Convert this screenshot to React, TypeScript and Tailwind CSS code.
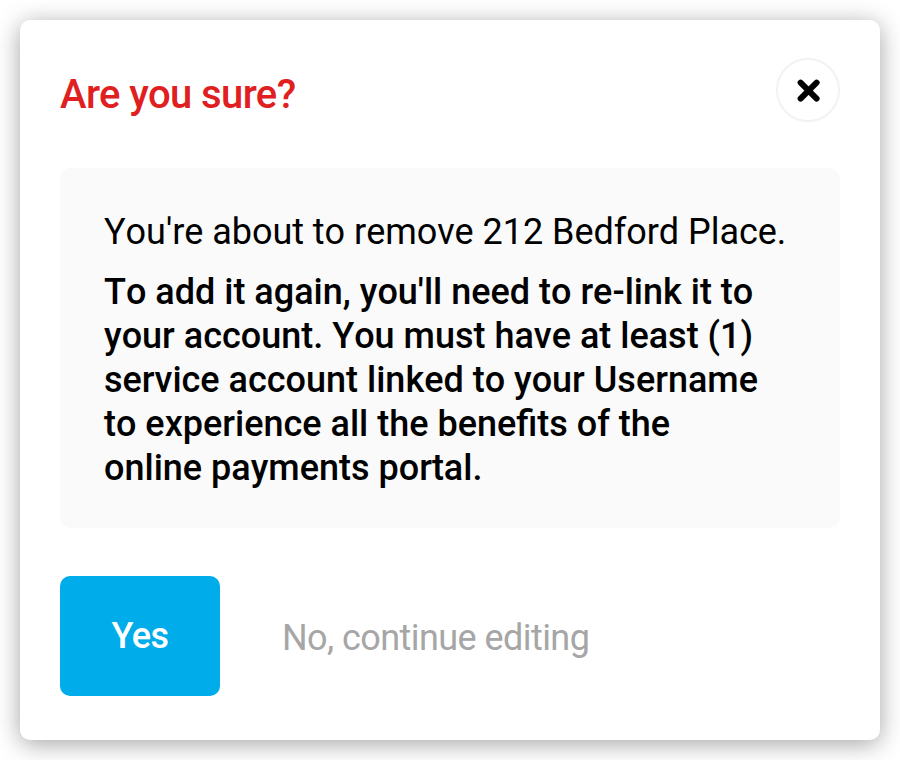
export default function App() {
  return (
    <div className="flex h-[760px] w-[900px] overflow-hidden bg-white p-5 font-['Roboto','Liberation_Sans',sans-serif]">
      <div className="flex w-full flex-col rounded-[10px] bg-white px-10 pt-[38px] shadow-[0_4px_24px_rgba(0,0,0,0.36)]">
        <div className="flex h-16 items-start justify-between">
          <h1 className="pt-[13px] text-[40px] leading-[48px] font-medium tracking-[-0.6px] text-[#e02020]">Are you sure?</h1>
          <button aria-label="Close" className="flex size-16 items-center justify-center rounded-full border-2 border-[#f2f2f2]">
            <svg className="size-6" viewBox="0 0 24 24" fill="none" stroke="black" strokeWidth="6" strokeLinecap="round">
              <path d="M4.6 4.6 20.6 20.6M20.6 4.6 4.6 20.6" />
            </svg>
          </button>
        </div>
        <div className="mt-[46px] h-[360px] rounded-[10px] bg-[#fafafa] px-11 pt-[42px] text-[36px] leading-[44px] text-black [font-kerning:none]">
          <p className="tracking-[-0.04px] whitespace-nowrap">You're about to remove 212 Bedford Place.</p>
          <p className="mt-4 font-medium whitespace-nowrap">
            To add it again, you'll need to re-link it to<br />
            your account. You must have at least (1)<br />
            service account linked to your Username<br />
            to experience all the benefits of the<br />
            online payments portal.
          </p>
        </div>
        <div className="mt-12 flex h-[120px] items-center text-[36px] leading-[44px] tracking-[-0.56px]">
          <button className="flex h-[120px] w-40 items-center justify-center rounded-[10px] bg-[#00ace9] font-medium text-white">Yes</button>
          <button className="ml-[62px] pt-1 text-[#a6a6a6]">No, continue editing</button>
        </div>
      </div>
    </div>
  );
}
